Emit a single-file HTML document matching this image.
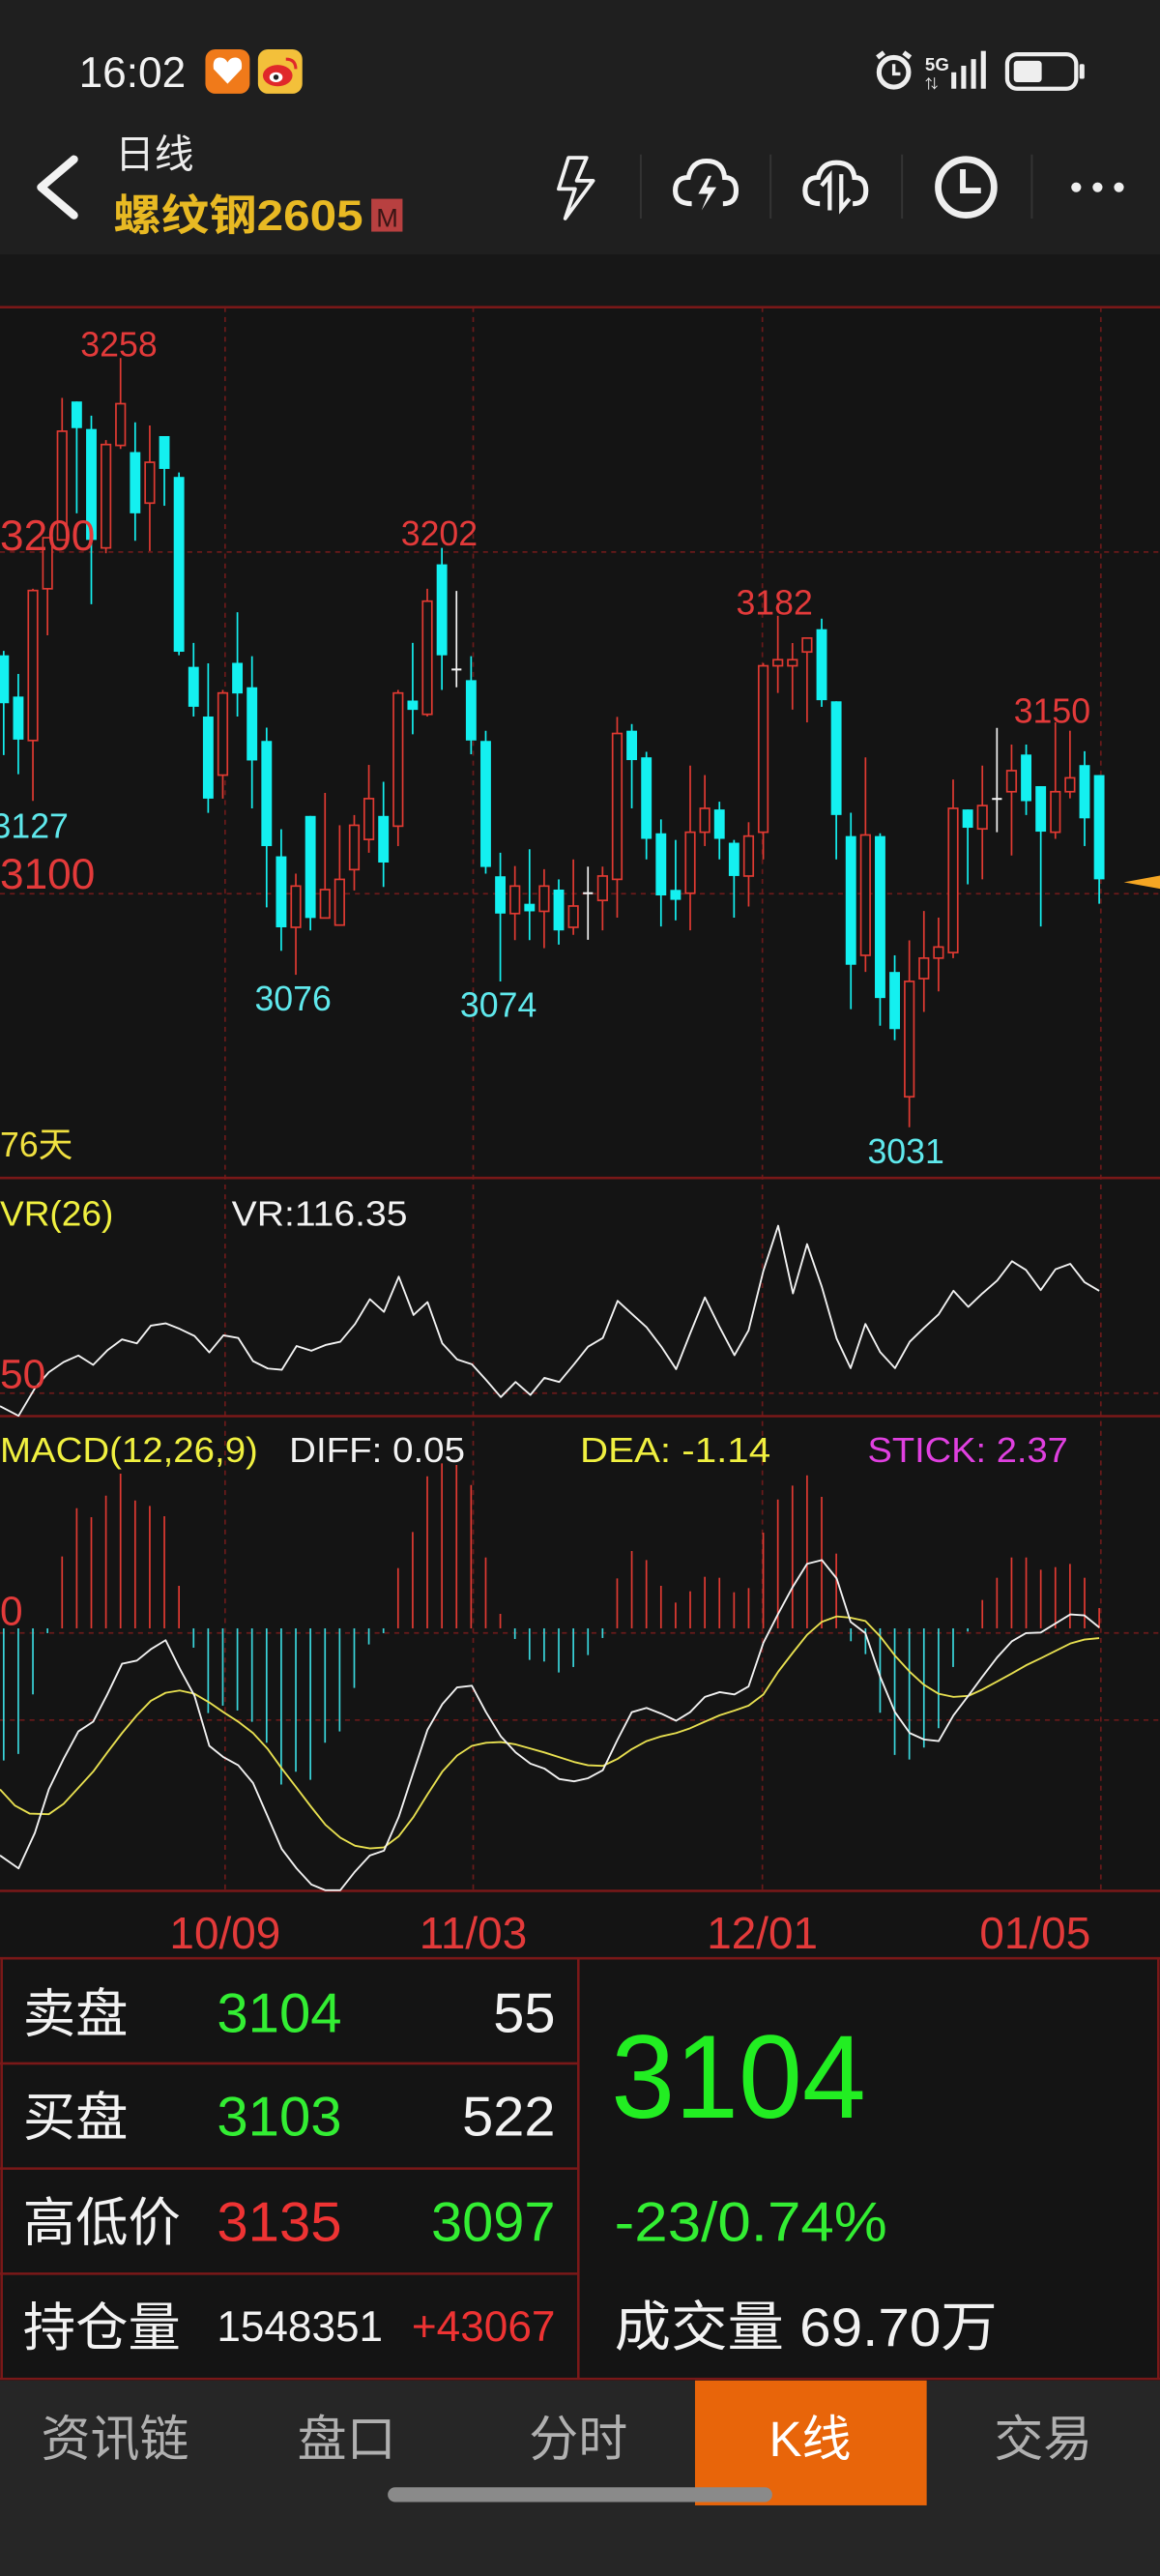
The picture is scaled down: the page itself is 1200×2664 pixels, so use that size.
<!DOCTYPE html>
<html><head><meta charset="utf-8">
<style>
html,body{margin:0;padding:0;background:#141414;width:1200px;height:2664px;overflow:hidden}
svg{display:block}
text{font-family:"Liberation Sans","Noto Sans CJK SC",sans-serif}
</style></head>
<body>
<svg id="s" xmlns="http://www.w3.org/2000/svg" width="1200" height="2664" viewBox="0 0 706 1568" preserveAspectRatio="none">
<rect x="0" y="0" width="706" height="1568" fill="#141414"/>
<rect x="0" y="0" width="706" height="155" fill="#1f1f1f"/>
<rect x="0" y="155" width="706" height="32" fill="#171717"/>
<!-- status bar -->
<text x="48" y="53" font-size="26" fill="#f2f2f2">16:02</text>
<rect x="125" y="30" width="27" height="27" rx="6" fill="#f07a1a"/>
<path d="M138.5 51 L130 42 Q129 35 134 35 Q137 35 138.5 38 Q140 35 143 35 Q148 35 147 42 Z" fill="#fff"/>
<rect x="157" y="30" width="27" height="27" rx="6" fill="#f3c03a"/>
<ellipse cx="169" cy="46" rx="9" ry="6.5" fill="#e0282a"/>
<ellipse cx="168" cy="47" rx="4" ry="3" fill="#fff"/>
<circle cx="168" cy="47" r="1.6" fill="#222"/>
<path d="M174 36 Q180 36 180 42" stroke="#e0282a" stroke-width="1.8" fill="none"/>
<circle cx="544" cy="44" r="9" fill="none" stroke="#eee" stroke-width="3"/>
<path d="M544 39 V45 H548" stroke="#eee" stroke-width="2" fill="none"/>
<path d="M534 35 L538 32 M554 35 L550 32" stroke="#eee" stroke-width="3"/>
<text x="563" y="43" font-size="11" font-weight="bold" fill="#eee">5G</text>
<rect x="579" y="44" width="3" height="10" fill="#eee"/><rect x="585" y="40" width="3" height="14" fill="#eee"/>
<rect x="591" y="36" width="3" height="18" fill="#eee"/><rect x="597" y="31" width="3" height="23" fill="#eee"/>
<text x="563" y="54" font-size="8" fill="#eee">⇅</text>
<rect x="613" y="33" width="42" height="21" rx="6" fill="none" stroke="#eee" stroke-width="2.5"/>
<rect x="617" y="37" width="17" height="13" rx="2" fill="#eee"/>
<rect x="657" y="39" width="3" height="9" rx="1" fill="#eee"/>
<!-- header -->
<path d="M45 97 L25 114 L45 131" stroke="#f2f2f2" stroke-width="5" fill="none" stroke-linecap="round" stroke-linejoin="round"/>
<text x="70" y="102" font-size="24" fill="#ececec">日线</text>
<text x="69" y="140" font-size="26" font-weight="bold" fill="#e8b923" textLength="152" lengthAdjust="spacingAndGlyphs">螺纹钢2605</text>
<rect x="226" y="121" width="19" height="20" fill="#b84040"/>
<text x="229" y="138" font-size="16" fill="#3a1515">M</text>
<path d="M346 96 L340 115 L350 115 L344 133 L361 110 L351 110 L357 96 Z" fill="none" stroke="#f2f2f2" stroke-width="2.2" stroke-linejoin="round"/>
<g stroke="#333" stroke-width="1.2"><line x1="390" y1="94" x2="390" y2="133"/><line x1="469" y1="94" x2="469" y2="133"/><line x1="549" y1="94" x2="549" y2="133"/><line x1="628" y1="94" x2="628" y2="133"/></g>
<path d="M421 124 Q411 124 411 116 Q411 108 419 108 Q421 98 430 98 Q440 98 441 108 Q448 108 448 116 Q448 124 440 124" fill="none" stroke="#f2f2f2" stroke-width="3"/>
<path d="M431 107 L425 118 L431 118 L427 128 L436 114 L430 114 L433 107 Z" fill="#f2f2f2"/>
<path d="M499 124 Q490 124 490 116 Q490 108 498 108 Q500 99 509 99 Q519 99 520 108 Q527 108 527 116 Q527 124 519 124" fill="none" stroke="#f2f2f2" stroke-width="3"/>
<path d="M505 128 V107 L500 113 M512 106 V127 L517 121" fill="none" stroke="#f2f2f2" stroke-width="2.5"/>
<circle cx="588" cy="114" r="17" fill="none" stroke="#eee" stroke-width="4"/>
<path d="M586 103 V116 H597" fill="none" stroke="#eee" stroke-width="3.5"/>
<circle cx="655" cy="114" r="3" fill="#eee"/><circle cx="668" cy="114" r="3" fill="#eee"/><circle cx="681" cy="114" r="3" fill="#eee"/>
<!-- grid -->
<g id="grid" stroke="#6a1a1a" stroke-width="1" stroke-dasharray="3,3">
<line x1="137" y1="187" x2="137" y2="1151"/><line x1="288" y1="187" x2="288" y2="1151"/>
<line x1="464" y1="187" x2="464" y2="1151"/><line x1="670" y1="187" x2="670" y2="1151"/>
<line x1="0" y1="336" x2="706" y2="336"/><line x1="0" y1="544" x2="706" y2="544"/>
<line x1="0" y1="848" x2="706" y2="848"/><line x1="0" y1="994" x2="706" y2="994"/><line x1="0" y1="1047" x2="706" y2="1047"/>
</g>
<g stroke="#7a1818" stroke-width="1.5">
<line x1="0" y1="187" x2="706" y2="187"/><line x1="0" y1="717" x2="706" y2="717"/>
<line x1="0" y1="862" x2="706" y2="862"/><line x1="0" y1="1151" x2="706" y2="1151"/>
</g>
<g id="candles"></g>
<g id="lines"></g>
<!-- chart labels -->
<g font-size="21" fill="#e33a3a">
<text x="49" y="217">3258</text><text x="244" y="332">3202</text><text x="448" y="374">3182</text><text x="617" y="440">3150</text>
</g>
<text x="0" y="335" font-size="26" fill="#e33a3a">3200</text>
<text x="0" y="541" font-size="26" fill="#e33a3a">3100</text>
<g font-size="21" fill="#5fe8ec">
<text x="-5" y="510">3127</text><text x="155" y="615">3076</text><text x="280" y="619">3074</text><text x="528" y="708">3031</text>
</g>
<text x="0" y="704" font-size="21" fill="#f0e040">76天</text>
<path d="M684 537 L706 533 L706 541 Z" fill="#f5a623"/>
<!-- VR -->
<text x="0" y="746" font-size="21" fill="#f0f040" textLength="69" lengthAdjust="spacingAndGlyphs">VR(26)</text>
<text x="141" y="746" font-size="21" fill="#f2f2f2" textLength="107" lengthAdjust="spacingAndGlyphs">VR:116.35</text>
<text x="0" y="845" font-size="25" fill="#e33a3a">50</text>
<!-- MACD labels -->
<g font-size="21">
<text x="0" y="890" fill="#f0f040" textLength="157" lengthAdjust="spacingAndGlyphs">MACD(12,26,9)</text>
<text x="176" y="890" fill="#f2f2f2" textLength="107" lengthAdjust="spacingAndGlyphs">DIFF: 0.05</text>
<text x="353" y="890" fill="#f0f040" textLength="116" lengthAdjust="spacingAndGlyphs">DEA: -1.14</text>
<text x="528" y="890" fill="#e040e0" textLength="122" lengthAdjust="spacingAndGlyphs">STICK: 2.37</text>
</g>
<text x="0" y="989" font-size="25" fill="#e33a3a">0</text>
<!-- dates -->
<g font-size="27" fill="#e33a3a" text-anchor="middle">
<text x="137" y="1186">10/09</text><text x="288" y="1186">11/03</text><text x="464" y="1186">12/01</text><text x="630" y="1186">01/05</text>
</g>
<!-- table -->
<g stroke="#7a1818" stroke-width="1.5" fill="none">
<line x1="0" y1="1192" x2="706" y2="1192"/>
<line x1="0" y1="1256" x2="352" y2="1256"/><line x1="0" y1="1320" x2="352" y2="1320"/><line x1="0" y1="1384" x2="352" y2="1384"/>
<line x1="0" y1="1448" x2="706" y2="1448"/>
<line x1="352" y1="1192" x2="352" y2="1448"/><line x1="1" y1="1192" x2="1" y2="1448"/><line x1="705" y1="1192" x2="705" y2="1448"/>
</g>
<g font-size="32" fill="#f2f2f2">
<text x="14" y="1237">卖盘</text><text x="14" y="1300">买盘</text><text x="14" y="1364">高低价</text><text x="14" y="1428">持仓量</text>
</g>
<g font-size="34">
<text x="132" y="1237" fill="#33ee33" textLength="76" lengthAdjust="spacingAndGlyphs">3104</text><text x="338" y="1237" fill="#f2f2f2" text-anchor="end">55</text>
<text x="132" y="1300" fill="#33ee33" textLength="76" lengthAdjust="spacingAndGlyphs">3103</text><text x="338" y="1300" fill="#f2f2f2" text-anchor="end">522</text>
<text x="132" y="1364" fill="#ee3333" textLength="76" lengthAdjust="spacingAndGlyphs">3135</text><text x="338" y="1364" fill="#33ee33" text-anchor="end">3097</text>
</g>
<text x="132" y="1425" font-size="26" fill="#f2f2f2" textLength="101" lengthAdjust="spacingAndGlyphs">1548351</text>
<text x="338" y="1425" font-size="26" fill="#ee3333" text-anchor="end">+43067</text>
<text x="372" y="1289" font-size="72" fill="#22ee22" textLength="155" lengthAdjust="spacingAndGlyphs">3104</text>
<text x="374" y="1364" font-size="34" fill="#33ee33" textLength="166" lengthAdjust="spacingAndGlyphs">-23/0.74%</text>
<text x="374" y="1428" font-size="33" fill="#f2f2f2" textLength="233" lengthAdjust="spacingAndGlyphs">成交量 69.70万</text>
<!-- tabs -->
<rect x="0" y="1449" width="706" height="119" fill="#262626"/>
<rect x="423" y="1449" width="141" height="76" fill="#e8650a"/>
<g font-size="30" fill="#b0b0b0" text-anchor="middle">
<text x="70" y="1495">资讯链</text><text x="211" y="1495">盘口</text><text x="352" y="1495">分时</text>
<text x="493" y="1495" fill="#fff">K线</text><text x="635" y="1495">交易</text>
</g>
<rect x="236" y="1514" width="234" height="9" rx="4.5" fill="#8a8a8a"/>
</svg>
<script>
var NS="http://www.w3.org/2000/svg";
function el(p,t,a){var e=document.createElementNS(NS,t);for(var k in a)e.setAttribute(k,a[k]);p.appendChild(e);return e;}
var A=[["c",780,888,770,1005],["c",873,970,822,1048],["r",634,972,630,1108],["r",515,630,515,735],["r",275,520,200,520],["c",208,268,208,460],["c",270,520,240,665],["r",305,538,295,550],["r",213,307,110,315],["c",322,460,255,522],["r",345,437,262,545],["c",286,360,286,443],["c",378,772,368,780],["c",806,896,752,918],["c",918,1103,798,1135],["r",865,1050,858,1103],["c",797,866,683,918],["c",852,1017,782,1125],["c",973,1210,943,1348],["c",1233,1393,1172,1446],["r",1300,1393,1272,1500],["c",1142,1372,1142,1400],["r",1308,1372,1090,1372],["r",1285,1388,1163,1388],["r",1163,1263,1140,1310],["r",1103,1195,1027,1225],["c",1142,1247,1065,1302],["r",865,1165,858,1210],["c",882,903,752,958],["r",658,913,630,918],["c",575,780,538,858],["w",812,812,635,852],["c",836,972,782,1003],["c",973,1257,950,1272],["c",1278,1362,1225,1515],["r",1300,1362,1255,1422],["c",1340,1357,1217,1422],["r",1300,1357,1262,1440],["c",1308,1400,1285,1432],["r",1345,1393,1240,1410]];
var B=[["w",1053,1053,1005,1137],["r",1022,1066,1005,1120],["r",765,1028,735,1097],["c",760,813,748,900],["c",808,955,798,992],["c",945,1057,920,1113],["c",1047,1065,957,1102],["r",943,1053,823,1120],["r",900,943,840,968],["c",902,955,888,992],["c",962,1022,957,1097],["r",950,1022,925,1077],["r",643,943,638,992],["r",632,643,553,692],["r",632,643,602,722],["r",593,618,593,745],["c",577,705,558,717],["c",707,912,707,992],["c",950,1182,908,1262],["r",948,1165,808,1195],["c",950,1242,945,1292],["c",1195,1298,1165,1318],["r",1212,1420,1138,1475],["r",1170,1207,1085,1267],["r",1150,1170,1097,1230],["r",900,1160,848,1170],["c",902,935,902,1037],["r",895,937,823,1028],["w",883,883,755,943],["r",832,870,785,985],["c",803,887,785,912],["c",860,942,860,1113],["r",870,943,745,955],["r",845,870,760,882],["c",822,918,797,968],["c",840,1028,840,1072]];
var g=document.getElementById("candles");
function X(i){return 2.25+i*8.89;}
function draw(arr,off,f){arr.forEach(function(d,j){var i=j+off,x=X(i),bt=f(d[1]),bb=f(d[2]),wt=f(d[3]),wb=f(d[4]);
 var col=d[0]=="c"?"#14f0f0":(d[0]=="r"?"#e03a32":"#f2f2f2");
 el(g,"line",{x1:x,y1:wt,x2:x,y2:wb,stroke:col,"stroke-width":1});
 if(d[0]=="w"){el(g,"line",{x1:x-3,y1:bt,x2:x+3,y2:bt,stroke:col,"stroke-width":1.2});return;}
 var h=Math.max(bb-bt,1.5);
 if(d[0]=="c")el(g,"rect",{x:x-3.2,y:bt,width:6.4,height:h,fill:col});
 else el(g,"rect",{x:x-2.8,y:bt,width:5.6,height:h,fill:"#141414",stroke:col,"stroke-width":1});
});}
draw(A,0,function(z){return 188.2+z*0.2701;});
draw(B,40,function(z){return 188.2+z*0.3376;});
var bars=[1085,1065,880,690,452,302,330,263,195,278,295,327,543,735,938,915,930,965,1030,1160,1120,1145,1030,995,860,725,690,488,376,203,163,168,230,455,630,708,773,778,812,795,758,705,520,435,463,543,595,560,515,518,563,550,378,275,232,200,267,443,715,755,937,1068,1082,1045,985,795,685,587,518,455,455,493,485,475,518,612];
var L=document.getElementById("lines");
function my(z){return 858.8+z*0.1961;}
var zero=my(675);
bars.forEach(function(z,i){var x=X(i),y=my(z);el(L,"line",{x1:x,y1:zero,x2:x,y2:y,stroke:y<zero?"#e03a32":"#3ad6dc","stroke-width":1});});
function poly(pts,fx,fy,col){var s=[];for(var k=0;k<pts.length;k+=2)s.push(fx(pts[k]).toFixed(1)+","+fy(pts[k+1]).toFixed(1));el(L,"polyline",{points:s.join(" "),fill:"none",stroke:col,"stroke-width":1.1,"stroke-linejoin":"round"});}
var fx=function(z){return z*0.4502;};
var diff=[0,1380,25,1420,47,1310,66,1175,86,1080,106,995,126,965,145,880,165,785,185,775,204,740,224,712,243,800,263,885,283,1040,302,1075,322,1100,342,1155,362,1260,381,1360,401,1420,421,1470,440,1488,460,1488,480,1430,500,1380,519,1365,539,1260,559,1120,578,990,598,910,618,858,638,853,657,935,677,1010,697,1060,717,1095,736,1110,756,1143,776,1150,795,1140,815,1115,835,1020,854,935,874,922,894,940,914,962,933,935,953,888,973,873,993,880,1012,855,1032,720,1052,630,1072,545,1091,475,1111,463,1131,520,1150,655,1170,690,1190,825,1210,935,1230,1000,1249,1020,1269,1025,1289,945,1309,885,1328,825,1348,765,1368,715,1387,690,1407,688,1427,660,1447,632,1466,635,1486,672];
var dea=[0,1175,20,1225,40,1250,66,1252,86,1220,106,1170,126,1120,145,1060,165,1000,185,945,204,900,224,875,243,868,263,878,283,905,302,935,322,965,342,1000,362,1050,381,1110,401,1170,421,1230,440,1285,460,1325,480,1350,500,1358,519,1355,539,1320,559,1260,578,1190,598,1120,618,1070,638,1040,657,1030,677,1028,697,1035,717,1048,736,1060,756,1075,776,1090,795,1100,815,1102,835,1080,854,1050,874,1025,894,1010,914,1000,933,985,953,965,973,945,993,930,1012,915,1032,880,1052,810,1072,750,1091,695,1111,655,1131,638,1150,642,1170,652,1190,700,1210,760,1230,810,1249,850,1269,878,1289,888,1309,885,1328,865,1348,840,1368,815,1387,790,1407,768,1427,745,1447,722,1466,710,1486,705];
poly(dea,fx,my,"#e8e050");
poly(diff,fx,my,"#f2f2f2");
var vr=[0,735,25,765,47,680,66,630,86,598,106,578,126,607,145,562,165,528,185,540,204,485,224,478,243,495,263,517,283,568,302,515,322,523,342,595,362,618,381,622,401,548,421,563,440,545,460,535,480,480,500,403,519,442,539,333,559,452,578,412,598,540,618,590,638,605,657,653,677,707,697,660,717,700,736,647,756,660,776,605,795,550,815,523,835,408,854,448,874,490,894,550,914,620,933,510,953,397,973,490,993,577,1012,500,1032,315,1052,175,1072,385,1091,232,1111,365,1131,525,1150,617,1170,480,1190,567,1210,617,1230,535,1249,492,1269,450,1289,377,1309,427,1328,385,1348,345,1368,285,1387,312,1407,375,1427,310,1447,293,1466,350,1486,377];
poly(vr,fx,function(z){return 711.8+z*0.1961;},"#f2f2f2");
</script>
</body></html>
